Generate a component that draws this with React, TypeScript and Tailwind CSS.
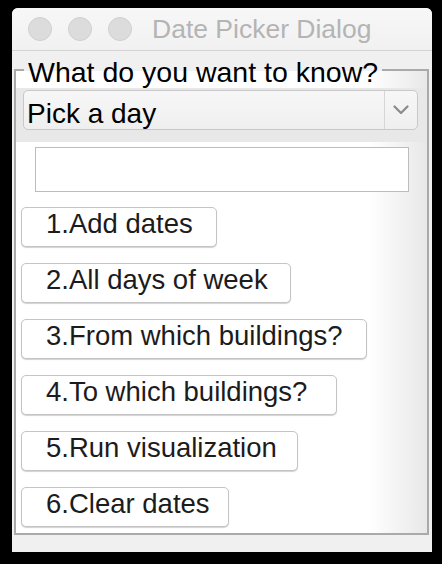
import React from "react";

const buttons: { label: string; w: string }[] = [
  { label: "1.Add dates", w: "w-[196px]" },
  { label: "2.All days of week", w: "w-[270px]" },
  { label: "3.From which buildings?", w: "w-[346px]" },
  { label: "4.To which buildings?", w: "w-[316px]" },
  { label: "5.Run visualization", w: "w-[277px]" },
  { label: "6.Clear dates", w: "w-[208px]" },
];

export default function App() {
  return (
    <div
      className="w-[442px] h-[564px] bg-black pt-[8px] pl-[12px] overflow-hidden"
      style={{ fontFamily: '"Liberation Sans", Arial, Helvetica, sans-serif' }}
    >
      <div className="w-[420px] h-[544px] rounded-t-[6px] overflow-hidden flex flex-col bg-[#f0f0f0]">
        {/* Title bar */}
        <div className="h-[43px] shrink-0 flex items-center pl-[16px] bg-gradient-to-b from-[#f7f7f7] to-[#f1f1f1] border-b border-[#d4d4d4]">
          <div className="flex gap-[16px]">
            <span className="w-[24px] h-[24px] rounded-full bg-[#dcdcdc] border border-[#d0d0d0]" />
            <span className="w-[24px] h-[24px] rounded-full bg-[#dcdcdc] border border-[#d0d0d0]" />
            <span className="w-[24px] h-[24px] rounded-full bg-[#dcdcdc] border border-[#d0d0d0]" />
          </div>
          <span className="ml-[20px] text-[26.5px] leading-[30px] text-[#b4b4b4]">
            Date Picker Dialog
          </span>
        </div>

        {/* Content */}
        <div className="flex-1 pl-[2px] pr-[3px]">
          <fieldset className="border-2 border-[#aaaaaa] bg-gradient-to-r from-white from-[86%] to-[#e8e8e8] pb-[6px]">
            <legend className="ml-[8px] px-[4px] pt-[6px] text-[28.5px] leading-[31px] text-black">
              What do you want to know?
            </legend>

            {/* Combo band */}
            <div className="bg-[#e8e8e8] pt-[2px] pb-[12px] pl-[7px] pr-[9px]">
              <div className="h-[40px] flex rounded-[5px] border border-[#c8c8c8] bg-gradient-to-b from-[#f7f7f7] to-[#efefef]">
                <div className="flex-1 pl-[3px] pt-[7px] text-[28px] leading-[31px] text-black whitespace-nowrap">
                  Pick a day
                </div>
                <div className="w-[33px] border-l border-[#d6d6d6] flex items-center justify-center">
                  <svg width="16" height="10" viewBox="0 0 16 10">
                    <path
                      d="M1.5 1.5 L8 8 L14.5 1.5"
                      fill="none"
                      stroke="#8a8a8a"
                      strokeWidth="2.2"
                      strokeLinecap="round"
                      strokeLinejoin="round"
                    />
                  </svg>
                </div>
              </div>
            </div>

            {/* Text field */}
            <div className="mt-[5px] ml-[19px] mr-[18px] h-[45px] border border-[#bcbcbc] bg-white" />

            {/* Buttons */}
            <div className="mt-[15px] ml-[5px] flex flex-col items-start gap-[16px]">
              {buttons.map((b) => (
                <button
                  key={b.label}
                  className={`${b.w} h-[40px] flex items-start pl-[24px] rounded-[5px] border border-[#c4c4c4] bg-white shadow-[0_1px_1px_rgba(0,0,0,0.18)] text-[27.5px] leading-[31px] text-[#1c1c1c] whitespace-nowrap text-left`}
                >
                  {b.label}
                </button>
              ))}
            </div>
          </fieldset>
        </div>
      </div>
    </div>
  );
}
